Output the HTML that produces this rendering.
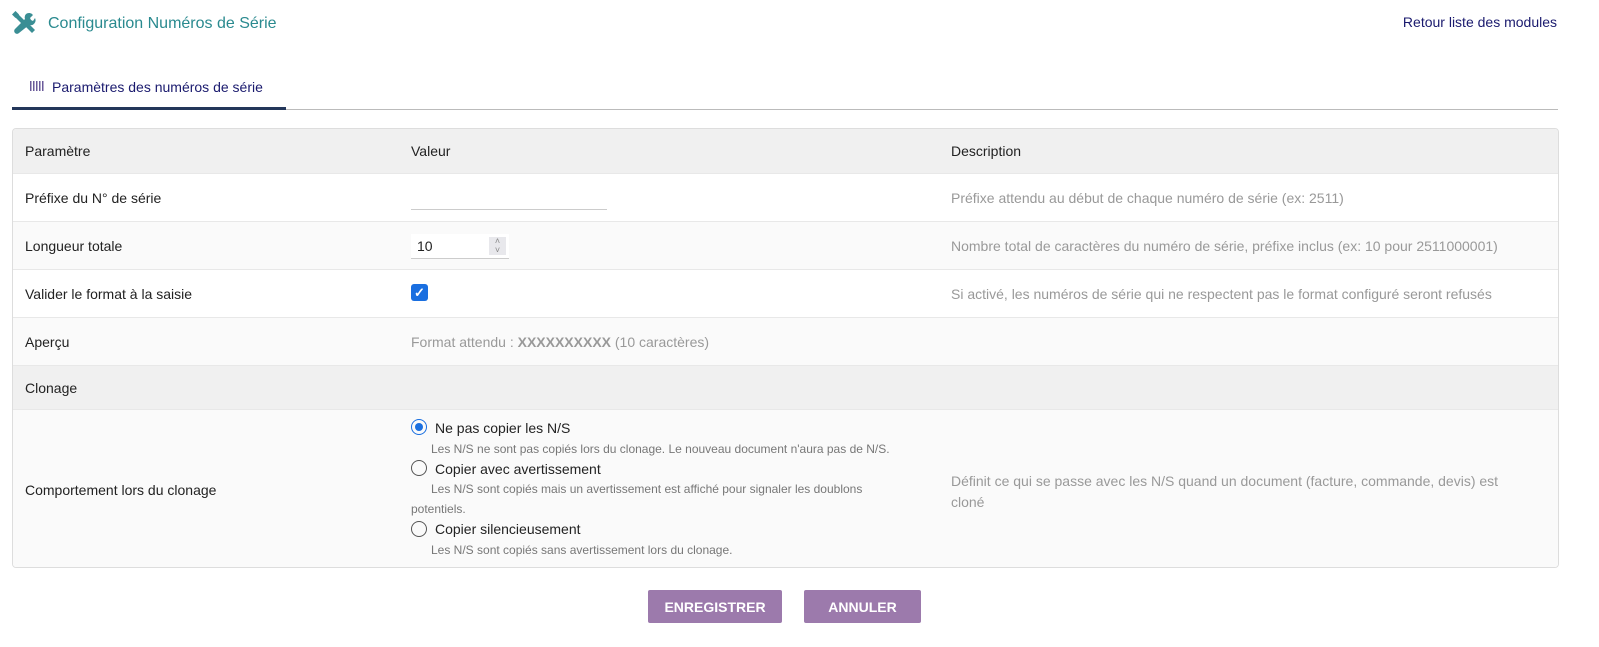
<!DOCTYPE html>
<html><head><meta charset="utf-8"><style>
body{margin:0;background:#fff;font-family:"Liberation Sans",sans-serif;font-size:14px;color:#222;width:1599px;height:647px;position:relative;overflow:hidden}
.a{position:absolute}
.title{left:48px;top:15px;font-size:16px;color:#2a8a8f}
.ret{right:42px;top:14px;color:#1a1a6e;font-size:14px}
.tab{left:52px;top:79px;color:#1a1a6e;font-size:14px}
.tbl{left:12px;top:128px;width:1545px;height:438px;border:1px solid #ddd;border-radius:4px;overflow:hidden}
.row{position:absolute;left:0;width:100%;border-top:1px solid #e8e8e8}
.c{position:absolute;top:50%;transform:translateY(-50%)}
.d{color:#999}
.btn{top:590px;height:33px;background:#9c7aac;color:#fff;font-weight:bold;font-size:14px;display:flex;align-items:center;justify-content:center;border-radius:2px}
.rad{position:absolute;width:14px;height:14px;border:1.5px solid #555;border-radius:50%}
.sm{font-size:12px;color:#777;position:absolute}
</style></head><body>
<svg class="a" style="left:12px;top:11px" width="24" height="24" viewBox="0 0 24 24"><g fill="#3a8e94"><path d="M2 5l3-3 9 9-3 3z"/><rect x="1" y="1" width="5" height="5" transform="rotate(45 3.5 3.5)"/><path d="M14 3a5 5 0 0 1 7 1l-3 3 1 2 2 1 2-3a5 5 0 0 1-6 7L7 22a2 2 0 0 1-4-4l10-10a5 5 0 0 1 1-5z"/><path d="M14 16l3-3 6 6-3 3z"/></g></svg>
<div class="a title">Configuration Numéros de Série</div>
<div class="a ret">Retour liste des modules</div>
<div class="a" style="left:30px;top:81px;width:14px;height:10px;background:repeating-linear-gradient(90deg,#6a5a9a 0 1.5px,transparent 1.5px 3px)"></div>
<div class="a tab">Paramètres des numéros de série</div>
<div class="a" style="left:12px;top:109px;width:1546px;height:1px;background:#bbb"></div>
<div class="a" style="left:12px;top:107px;width:274px;height:3px;background:#23375a"></div>
<div class="a tbl">
<div class="row" style="top:0;height:44px;background:#f0f0f0;border:0"><span class="c" style="left:12px">Paramètre</span><span class="c" style="left:398px">Valeur</span><span class="c" style="left:938px">Description</span></div>
<div class="row" style="top:44px;height:48px"><span class="c" style="left:12px">Préfixe du N° de série</span><div class="a" style="left:398px;top:35px;width:196px;height:1px;background:#ccc"></div><span class="c d" style="left:938px">Préfixe attendu au début de chaque numéro de série (ex: 2511)</span></div>
<div class="row" style="top:92px;height:48px;background:#fafafa"><span class="c" style="left:12px">Longueur totale</span><div class="a" style="left:398px;top:12px;width:98px;height:24px;background:#fff;border-bottom:1px solid #ccc"></div><span class="c" style="left:404px">10</span><div class="a" style="left:476px;top:15px;width:17px;height:18px;background:#e8e8ec;color:#888;font-size:9px;text-align:center;line-height:9px">˄<br>˅</div><span class="c d" style="left:938px">Nombre total de caractères du numéro de série, préfixe inclus (ex: 10 pour 2511000001)</span></div>
<div class="row" style="top:140px;height:48px"><span class="c" style="left:12px">Valider le format à la saisie</span><div class="a" style="left:398px;top:14px;width:17px;height:17px;background:#1a6fe0;border-radius:3px;color:#fff;font-size:13px;text-align:center;line-height:17px;font-weight:bold">✓</div><span class="c d" style="left:938px">Si activé, les numéros de série qui ne respectent pas le format configuré seront refusés</span></div>
<div class="row" style="top:188px;height:48px;background:#fafafa"><span class="c" style="left:12px">Aperçu</span><span class="c d" style="left:398px">Format attendu : <b>XXXXXXXXXX</b> (10 caractères)</span></div>
<div class="row" style="top:236px;height:44px;background:#f0f0f0"><span class="c" style="left:12px">Clonage</span></div>
<div class="row" style="top:280px;height:159px;background:#fafafa"><span class="c" style="left:12px">Comportement lors du clonage</span>
<div class="rad" style="left:398px;top:9px;border-color:#1a6fe0"><div style="position:absolute;left:3px;top:3px;width:8px;height:8px;border-radius:50%;background:#1a6fe0"></div></div>
<span class="a" style="left:422px;top:10px">Ne pas copier les N/S</span>
<span class="sm" style="left:418px;top:32px">Les N/S ne sont pas copiés lors du clonage. Le nouveau document n'aura pas de N/S.</span>
<div class="rad" style="left:398px;top:50px"></div>
<span class="a" style="left:422px;top:51px">Copier avec avertissement</span>
<span class="sm" style="left:418px;top:72px">Les N/S sont copiés mais un avertissement est affiché pour signaler les doublons</span>
<span class="sm" style="left:398px;top:92px">potentiels.</span>
<div class="rad" style="left:398px;top:111px"></div>
<span class="a" style="left:422px;top:111px">Copier silencieusement</span>
<span class="sm" style="left:418px;top:133px">Les N/S sont copiés sans avertissement lors du clonage.</span>
<span class="a d" style="left:938px;top:61px;width:580px;line-height:21px">Définit ce qui se passe avec les N/S quand un document (facture, commande, devis) est cloné</span></div>
</div>
<div class="a btn" style="left:648px;width:134px">ENREGISTRER</div>
<div class="a btn" style="left:804px;width:117px">ANNULER</div>
</body></html>
